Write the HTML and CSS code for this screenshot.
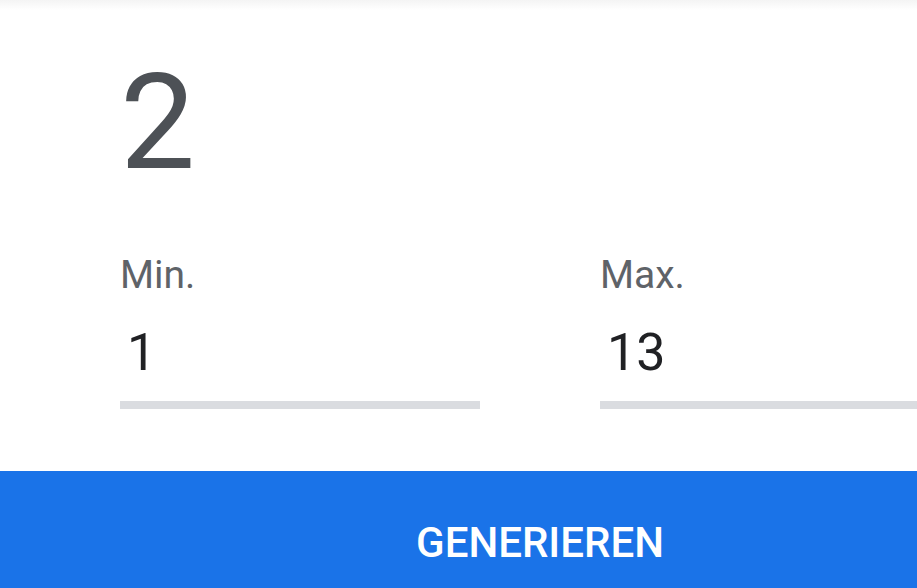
FILE: index.html
```html
<!DOCTYPE html>
<html lang="de">
<head>
  <meta charset="UTF-8">
  <meta name="viewport" content="width=device-width, initial-scale=1.0">
  <title>Zufallszahl</title>
  <link rel="stylesheet" href="styles.css">
</head>
<body>
  <div class="card">
    <div class="result" id="result">2</div>
    <div class="fields">
      <label class="field">
        <span class="field-label">Min.</span>
        <input class="field-input" type="text" id="min" value="1">
      </label>
      <label class="field">
        <span class="field-label">Max.</span>
        <input class="field-input" type="text" id="max" value="13">
      </label>
    </div>
    <button type="button" class="generate" id="generate">Generieren</button>
  </div>
</body>
</html>
```

FILE: styles.css
```css
body {
  margin: 0;
  font-family: Roboto, "Liberation Sans", Arial, sans-serif;
  background-color: #fff;
  overflow: hidden;
}
.card {
  width: 1080px;
  padding-top: 56px;
  background: linear-gradient(#f4f4f4, #fff 10px);
}
.result {
  padding-left: 120px;
  font-size: 134px;
  line-height: 134px;
  color: #4d5156;
}
.fields {
  display: flex;
  gap: 120px;
  padding: 61px 120px 0;
}
.field {
  width: 360px;
  display: flex;
  flex-direction: column;
}
.field-label {
  font-size: 39px;
  line-height: 48px;
  color: #5f6368;
}
.field-input {
  margin-top: 22px;
  padding: 0 0 16px 7px;
  border: none;
  border-bottom: 8px solid #dadce0;
  font-family: inherit;
  font-size: 52px;
  line-height: 64px;
  height: 64px;
  color: #202124;
  outline: none;
  background: transparent;
}
.generate {
  display: block;
  width: 100%;
  margin-top: 62px;
  padding: 48px 0 40px;
  border: none;
  background-color: #1a73e8;
  color: #fff;
  font-family: inherit;
  font-size: 42px;
  font-weight: 500;
  line-height: 48px;
  text-transform: uppercase;
  cursor: pointer;
}
```
